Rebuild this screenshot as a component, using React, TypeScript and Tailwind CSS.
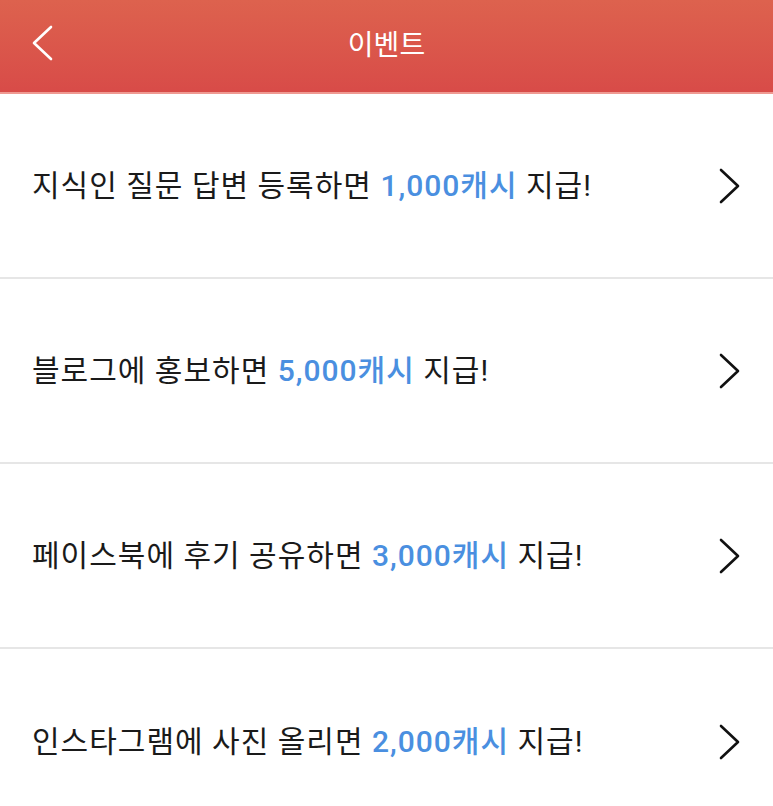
const events = [
  { pre: "지식인 질문 답변 등록하면", cash: "1,000캐시" },
  { pre: "블로그에 홍보하면", cash: "5,000캐시" },
  { pre: "페이스북에 후기 공유하면", cash: "3,000캐시" },
  { pre: "인스타그램에 사진 올리면", cash: "2,000캐시" },
];

function Chevron({ dir }: { dir: "left" | "right" }) {
  return (
    <svg width="22" height="38" viewBox="0 0 22 38" fill="none">
      {dir === "left" ? (
        <path d="M20 3 L3 19 L20 35" stroke="currentColor" strokeWidth="2.6" strokeLinecap="round" strokeLinejoin="round" />
      ) : (
        <path d="M3 3 L20 19 L3 35" stroke="currentColor" strokeWidth="2.6" strokeLinecap="round" strokeLinejoin="round" />
      )}
    </svg>
  );
}

export default function App() {
  return (
    <div
      className="min-h-[806px] w-full bg-white"
      style={{ fontFamily: 'Roboto, "Noto Sans CJK KR", "Noto Sans", sans-serif' }}
    >
      {/* header */}
      <header className="relative flex h-[94px] items-center justify-center border-b-2 border-[#ef9a92] bg-gradient-to-b from-[#dd624e] to-[#d84b48]">
        <button type="button" className="absolute left-[31px] top-[24px] text-white">
          <Chevron dir="left" />
        </button>
        <h1 className="text-[28px] font-normal text-white">이벤트</h1>
      </header>

      <ul>
        {events.map((e, i) => (
          <li
            key={i}
            className="flex h-[185px] items-center justify-between border-b-2 border-[#e6e6e6] pl-[32px] pr-[33px] last:border-b-0"
          >
            <p className="text-[30px] tracking-[1px] text-[#1a1a1a]">
              {e.pre} <span className="font-medium text-[#4a8fe0]">{e.cash}</span> 지급!
            </p>
            <span className="text-[#111]">
              <Chevron dir="right" />
            </span>
          </li>
        ))}
      </ul>
    </div>
  );
}
